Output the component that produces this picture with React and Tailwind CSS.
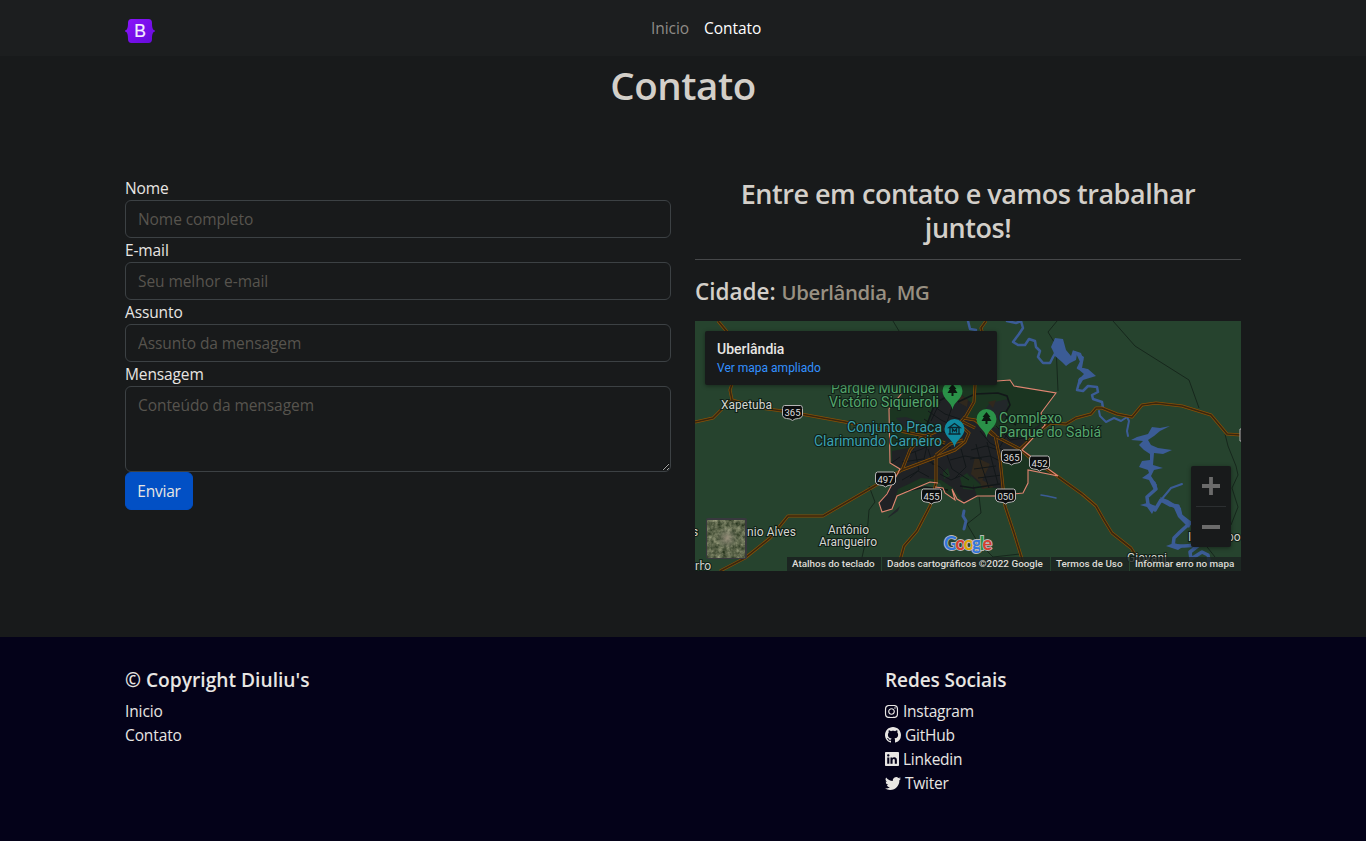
import { BsGithub, BsLinkedin, BsTwitter } from "react-icons/bs";
import { FaInstagram } from "react-icons/fa";

const fieldClass =
  "block w-full rounded-[6px] border border-[#3c4144] bg-[#181a1b] px-3 py-[6px] text-[15.5px] leading-6 tracking-[-0.07px] text-[#dad7d2] placeholder:text-[#57544e]";

function Field({ label, placeholder }) {
  return (
    <label className="block">
      <span className="block h-6 leading-6">{label}</span>
      <input className={fieldClass + " h-[38px]"} placeholder={placeholder} />
    </label>
  );
}

const roads = [
  "M718 321L728 333L736 345V360L732 384L730 390L732 400L726 405L713 418L695 422",
  "M732 400L760 408L790 412L845 422L868 427L900 431L925 436L945 443",
  "M986 321L981 328L983 335L975 385L974 402L966 416L959 424L969 433L965 442L955 450L942 455L902 470L885 480L823 516H788L770 538L745 558L720 571",
  "M963 418L975 420L993 435L1020 449L1030 458L1057 476L1082 494L1096 506L1104 520L1112 533L1131 548L1136 556L1155 571",
  "M975 420L984 425L995 435L1000 459L1005 506L1014 533L1022 559L1025 571",
  "M936 455V483L930 506L917 531L904 546L897 571",
  "M1020 449L1037 433L1050 423L1066 424L1076 418L1091 414L1096 408H1102L1117 414L1132 417L1142 405L1156 403L1182 406L1211 415L1227 434L1241 435",
  "M902 470L910 450L921 438L940 430",
  "M936 455L950 444L963 440M955 430L963 422L975 428",
];

const streets = [
  "M932 405L945 414L960 419M928 411L941 420L958 428M924 419L940 430L955 438M940 402L931 421M953 404L946 425M920 430L913 450M930 432L924 459",
  "M906 455L922 449L935 442L951 448M902 462L923 459L940 467L948 475M915 451L919 470L910 478M928 449L933 465M946 452L952 469L969 480M961 449L966 467L955 478",
  "M971 450L986 446L998 450M970 459L990 456L1000 461M974 469L996 466M978 478L1002 475M976 444L981 464L989 488M987 442L993 465L998 484",
  "M980 431L990 443L1003 450M1007 434L1000 447M996 426L1010 440L1025 438M950 460L965 456L982 459M890 464L900 457M902 480L918 471L929 477M940 474L951 480L960 476",
];

function Shield({ x, y, n }) {
  return (
    <g>
      <path
        d={`M${x - 8} ${y - 7}H${x + 8}Q${x + 10} ${y - 7} ${x + 10} ${y - 4}V${y + 3}Q${x + 9} ${y + 6} ${x + 6} ${y + 6}Q${x + 2} ${y + 6} ${x} ${y + 8}Q${x - 2} ${y + 6} ${x - 6} ${y + 6}Q${x - 9} ${y + 6} ${x - 10} ${y + 3}V${y - 4}Q${x - 10} ${y - 7} ${x - 8} ${y - 7}Z`}
        fill="#0c0e0f"
        stroke="#b5b5b5"
        strokeWidth="1"
      />
      <text x={x} y={y + 3.5} textAnchor="middle" fontSize="9.5" fill="#dedede">{n}</text>
    </g>
  );
}

function Pin({ x, y, color, museum }) {
  return (
    <g transform={`translate(${x} ${y})`}>
      <path d="M0 18.500C-1 11-10 8-10 0A10 10 0 0 1 10 0C10 8 1 11 0 18.500Z" fill={color} />
      {museum ? (
        <path d="M-5.500 -1.500L0 -5.500L5.500 -1.500ZM-4.500 -1.500V4.500M4.500 -1.500V4.500M-6 5H6M-2 3.500V0L0 2L2 0V3.500" fill="none" stroke="#0b2730" strokeWidth="1.300" />
      ) : (
        <path d="M0 -7L4 -2H2.500L5 2H1V5H-1V2H-5L-2.500 -2H-4Z" fill="#0c1710" />
      )}
    </g>
  );
}

function MapDrawing() {
  return (
    <svg viewBox="695 321 546 250" className="block h-[250px] w-[546px] font-['Roboto',sans-serif]">
      <defs>
        <filter id="terrain" x="0" y="0" width="1" height="1" colorInterpolationFilters="sRGB">
          <feTurbulence type="fractalNoise" baseFrequency="0.22" numOctaves="4" seed="8" />
          <feColorMatrix values="0.6 0 0 0 0.07  0.55 0 0 0 0.13  0.5 0 0 0 0.05  0 0 0 0 1" />
        </filter>
        <radialGradient id="town">
          <stop offset="0" stopColor="#a59786" stopOpacity=".8" />
          <stop offset="1" stopColor="#75796a" stopOpacity="0" />
        </radialGradient>
      </defs>
      <rect x="695" y="321" width="546" height="250" fill="#26432e" />

      <path id="municipality" d="M902 385L997 381L1010 380L1014 386L1056 393L1041 413L1045 425L1022 450L1058 476L1028 470V483L1023 493L977 496L964 503L957 499L952 489L955 500L945 493L940 483L930 482L897 496L892 509L882 512L879 503L887 494L900 469L890 463L889 409L902 393Z" fill="#1b3521" />
      <path d="M938 393L955 388L964 397L973 404L967 416L988 426L1004 430L1022 438L1031 430L1042 423L1021 451L999 453L1003 489L982 486L970 475L977 496L964 503L953 488L941 480L921 478L909 484L898 489L892 509L883 511L879 503L887 493L902 469L892 463V451L909 448L923 437L930 420Z" fill="#202225" />
      <path d="M990 403L1008 399L1007 417L995 420L983 412ZM896 418L906 417L920 422L926 429L906 429ZM889 516L900 506L898 511L888 518Z" fill="#22272a" />
      <path d="M961 395L968 400L967 407L958 402ZM975 457L990 464L981 483L971 474ZM988 402L996 400L993 408ZM979 478L994 487L982 489Z" fill="#30281d" />
      <path d="M960 478L967 473L973 480L973 490L963 489ZM943 472L948 468L950 476L944 479Z" fill="#1b3521" />

      <g fill="none" stroke="#121719" strokeWidth="1">
        {streets.map((d) => <path key={d} d={d} />)}
        <path strokeWidth="1.600" d="M958 402L975 394L998 393L1007 396L1010 405L1006 412L1007 418L1016 425M925 430L935 403L950 395M960 486L973 488L1000 484M907 491L925 487L948 490" />
        <path stroke="#16271c" d="M1113 321L1135 346L1189 380L1199 408M979 496L981 513L967 524L977 541L993 557L1020 554M869 486L875 502L869 510L867 535L859 571M1225 434L1228 446L1236 466L1238 475L1232 488L1238 507L1231 525M893 321L899 331M1057 321L1048 332L1056 345L1058 391M1204 543L1215 557" />
      </g>

      <g fill="none" stroke="#3b5c96" strokeLinejoin="round" strokeLinecap="round">
        <path strokeWidth="2.500" d="M968 321L970 329L976 330M1007 321L1016 323L1021 321L1023 328L1019 334L1013 342L1018 345H1025L1029 339L1035 341L1036 347L1040 351L1038 357L1043 363L1050 363L1053 357L1057 350" />
        <path strokeWidth="2.500" d="M1074 352L1080 354L1082 360L1078 368L1085 370L1091 375L1080 379L1077 390L1083 391L1088 386L1097 387L1098 392L1092 395L1093 399L1102 402L1103 408" />
        <path strokeWidth="2" d="M1099 411L1100 416L1106 422L1114 418L1121 421L1127 417L1129 421L1127 431L1128 436M1161 500L1171 488L1182 484" />
        <path strokeWidth="3.500" d="M1154 483L1156 489L1147 497L1148 504L1155 510L1161 500L1170 505L1178 506L1181 516L1190 523L1180 532L1174 538L1173 546L1184 546L1199 545L1190 552L1191 559L1202 552L1208 555L1210 566" />
        <path strokeWidth="3" d="M964 511L963 516L966 521L964 529" />
        <path strokeWidth="1.500" d="M1041 495L1047 496L1056 498" />
      </g>
      <g fill="#3b5c96">
        <path d="M1051 347L1055 338L1063 339L1066 350L1071 356L1073 350L1077 354L1076 360L1070 363L1066 366L1062 362L1055 356L1053 351Z" />
        <path d="M1075 351L1084 357L1082 368L1088 369L1096 376L1083 380L1080 385L1078 380L1084 374L1078 369L1080 362Z" />
        <path d="M1170 426L1160 431L1154 436L1148 440L1151 445L1158 448L1172 450L1163 454L1154 453L1153 465L1163 468L1154 470L1151 476L1157 485L1154 490L1149 480L1142 478L1149 473L1148 470L1139 467L1142 461L1150 460L1150 454L1144 450L1139 445L1143 441L1131 440L1137 437L1148 434L1152 427L1160 428Z" />
        <path d="M1156 506L1147 503L1140 505L1147 507L1152 514ZM1160 497L1168 500L1181 508L1182 517L1192 522L1189 528L1178 517L1174 508L1164 503ZM1166 546L1174 543L1184 546L1178 550Z" />
      </g>

      <g fill="none" strokeLinejoin="round">
        {roads.map((d) => <path key={d} d={d} stroke="#875007" strokeWidth="3" />)}
        {roads.map((d) => <path key={d} d={d} stroke="#3a260f" strokeWidth="1.600" />)}
      </g>
      <path d="M997 381L1010 380L1014 386L1056 393L1041 413L1045 425L1022 450L1058 476L1028 470V483L1023 493L1013 494M995 496H977L964 503L957 499L952 489L955 500L945 493L943 488L935 487M938 483L930 482L897 496L892 509L882 512L879 503L887 494L900 469L890 463L889 409L902 393" fill="none" stroke="#e28672" strokeWidth="1.100" />

      <g fontSize="14" stroke="#102017" strokeWidth="2.200" paintOrder="stroke">
        <g fill="#55a66d">
          <text x="831" y="393" textLength="108">Parque Municipal</text>
          <text x="829" y="407" textLength="110">Victório Siquieroli</text>
          <text x="999" y="422.500" textLength="63">Complexo</text>
          <text x="999" y="436.500" textLength="102">Parque do Sabiá</text>
        </g>
        <g fill="#3ba0b1">
          <text x="847" y="432" textLength="95">Conjunto Praca</text>
          <text x="814" y="446" textLength="128">Clarimundo Carneiro</text>
        </g>
        <g fill="#d5d5d0" fontSize="12">
          <text x="721" y="408.500" textLength="51">Xapetuba</text>
          <text x="692" y="535.500">s</text>
          <text x="747" y="535.500" textLength="49">nio Alves</text>
          <text x="828" y="533.500" textLength="41">Antônio</text>
          <text x="819" y="545.500" textLength="58">Arangueiro</text>
          <text x="695" y="570" textLength="16">nho</text>
          <text x="1127" y="562" textLength="40">Giovani</text>
          <text x="1188" y="540.500">I</text>
          <text x="1227" y="540.500">po</text>
        </g>
      </g>
      <Pin x={952.5} y={391} color="#2a9148" />
      <Pin x={986.5} y={419} color="#2a9148" />
      <Pin x={954.5} y={429} color="#108aa0" museum />
      <Shield x={792.5} y={412.5} n="365" />
      <Shield x={1011.5} y={457} n="365" />
      <Shield x={1039.5} y={463} n="452" />
      <Shield x={885.5} y={479} n="497" />
      <Shield x={931.5} y={496} n="455" />
      <Shield x={1005.5} y={496} n="050" />
      <path d="M1242 429H1240V441H1242" fill="#111" stroke="#b5b5b5" />

      <rect x="706" y="518" width="41" height="41" rx="2" fill="#38383e" />
      <rect x="707.500" y="520" width="37.500" height="37.500" filter="url(#terrain)" />
      <circle cx="727" cy="538" r="11" fill="url(#town)" />
      <text x="944" y="550" textLength="48" fontSize="18" fontFamily="Lato, sans-serif" fontWeight="700" stroke="#b9b9b9" strokeWidth="1.800" paintOrder="stroke">
        <tspan fill="#3275dc">G</tspan><tspan fill="#d63f32">o</tspan><tspan fill="#dda600">o</tspan><tspan fill="#3275dc">g</tspan><tspan fill="#259442">l</tspan><tspan fill="#d63f32">e</tspan>
      </text>
    </svg>
  );
}

function CityMap() {
  return (
    <div className="relative h-[250px] w-[546px] overflow-hidden font-['Roboto',sans-serif] tracking-normal">
      <MapDrawing />
      <div className="absolute left-[10px] top-[10px] h-[54px] w-[292px] rounded-[2px] bg-[#181a1b] px-3 pt-[9px] shadow-[0_1px_4px_rgba(0,0,0,0.4)]">
        <p className="text-[14px] font-medium leading-[18px] text-[#e8e6e3]">Uberlândia</p>
        <p className="text-[12px] leading-[20px] text-[#3391ff]">Ver mapa ampliado</p>
      </div>
      <div className="absolute left-[496px] top-[145px] flex h-[81px] w-10 flex-col items-center rounded-[2px] bg-[#181a1b] shadow-[0_1px_4px_rgba(0,0,0,0.4)]">
        <svg viewBox="0 0 40 81" className="h-[81px] w-10">
          <path d="M20 11V29M11 20H29M11 61H29" stroke="#6b6b6b" strokeWidth="3.800" />
          <path d="M5 40.500H35" stroke="#2c2f31" />
        </svg>
      </div>
      <div className="absolute bottom-0 right-0 flex h-[14px] text-[9.9px] font-medium leading-[14px] text-[#dedbd6]">
        <span className="w-[94px] whitespace-nowrap bg-[#1b2220]/90 pl-[5px]">Atalhos do teclado</span>
        <span className="w-[169px] whitespace-nowrap border-l border-[#26432e] bg-[#1b2220]/80 pl-[5px]">Dados cartográficos ©2022 Google</span>
        <span className="w-[79px] whitespace-nowrap border-l border-[#26432e] bg-[#1b2220]/80 pl-[5px]">Termos de Uso</span>
        <span className="w-[112px] whitespace-nowrap border-l border-[#26432e] bg-[#1b2220]/80 pl-[5px]">Informar erro no mapa</span>
      </div>
    </div>
  );
}

const socials = [
  [FaInstagram, "Instagram", "size-[15px] -ml-px"],
  [BsGithub, "GitHub", "size-4"],
  [BsLinkedin, "Linkedin", "size-[14px]"],
  [BsTwitter, "Twiter", "size-4"],
];

export default function App() {
  return (
    <div className="flex h-[841px] flex-col bg-[#181a1b] font-['Open_Sans',sans-serif] text-[15.5px] leading-6 tracking-[-0.12px] text-[#e8e6e3]">
      <nav className="h-14 bg-[#1c1e1f]">
        <div className="mx-auto flex h-full w-[1116px]">
          <a href="#" className="mt-[19px] h-6 w-[30px]">
            <svg viewBox="0 0 30 24" className="h-6 w-[30px]">
              <defs>
                <linearGradient id="brand" x1="0" y1="0" x2="1" y2="1">
                  <stop stopColor="#8b14fc" />
                  <stop offset="1" stopColor="#650bd9" />
                </linearGradient>
              </defs>
              <path d="M6.500 0H23.500Q27 0 27 4C27 8 27.500 11 30 11.500V12.500C27.500 13 27 16 27 20Q27 24 23.500 24H6.500Q3 24 3 20C3 16 2.500 13 0 12.500V11.500C2.500 11 3 8 3 4Q3 0 6.500 0Z" fill="url(#brand)" />
              <text x="15" y="18" textAnchor="middle" fontFamily="Liberation Sans, sans-serif" fontSize="17.500" fill="#f3edff" stroke="#f3edff" strokeWidth=".2">B</text>
            </svg>
          </a>
          <div className="ml-[496px] mt-4 flex gap-4 tracking-[-0.05px]">
            <a href="#" className="w-[37px] text-[#8f8c87]">Inicio</a>
            <a href="#" className="text-white">Contato</a>
          </div>
        </div>
      </nav>
      <main className="mx-auto w-[1116px] flex-1">
        <h1 className="mt-[5px] text-center text-[38.5px] font-semibold leading-[48px] tracking-[-0.45px] text-[#d3cfc9]">Contato</h1>
        <div className="mt-[67px] flex gap-6">
          <form className="w-[546px]">
            <Field label="Nome" placeholder="Nome completo" />
            <Field label="E-mail" placeholder="Seu melhor e-mail" />
            <Field label="Assunto" placeholder="Assunto da mensagem" />
            <label className="block">
              <span className="block h-6 leading-6">Mensagem</span>
              <textarea className={fieldClass + " h-[86px] resize-y"} placeholder="Conteúdo da mensagem" />
            </label>
            <button type="button" className="h-[38px] w-[68px] rounded-[6px] border border-[#024fc4] bg-[#0250c5] tracking-[-0.2px]">Enviar</button>
          </form>
          <section className="w-[546px] text-[#d3cfc9]">
            <h2 className="mt-px text-center text-[27px] font-semibold leading-[34px] tracking-[-0.47px]">Entre em contato e vamos trabalhar<br />juntos!</h2>
            <hr className="mt-[14px] border-[#46484a]" />
            <h3 className="mt-4 h-[45px] text-[22.5px] font-semibold leading-[31px] tracking-normal">
              Cidade: <small className="text-[20.3px] font-semibold tracking-[-0.35px] text-[#989082]">Uberlândia, MG</small>
            </h3>
            <CityMap />
          </section>
        </div>
      </main>
      <footer className="h-[204px] bg-[#040219]">
        <div className="mx-auto flex w-[1116px] pt-[31px]">
          <div className="w-[760px]">
            <h5 className="mb-[7px] text-[19.2px] font-semibold leading-6 tracking-normal">© Copyright Diuliu's</h5>
            <a href="#" className="block">Inicio</a>
            <a href="#" className="block">Contato</a>
          </div>
          <div>
            <h5 className="mb-[7px] text-[19px] font-semibold leading-6 tracking-[-0.08px]">Redes Sociais</h5>
            {socials.map(([Icon, name, size]) => (
              <a href="#" key={name} className="flex items-center gap-1 tracking-[-0.25px]">
                <Icon className={size} />{name}
              </a>
            ))}
          </div>
        </div>
      </footer>
    </div>
  );
}
